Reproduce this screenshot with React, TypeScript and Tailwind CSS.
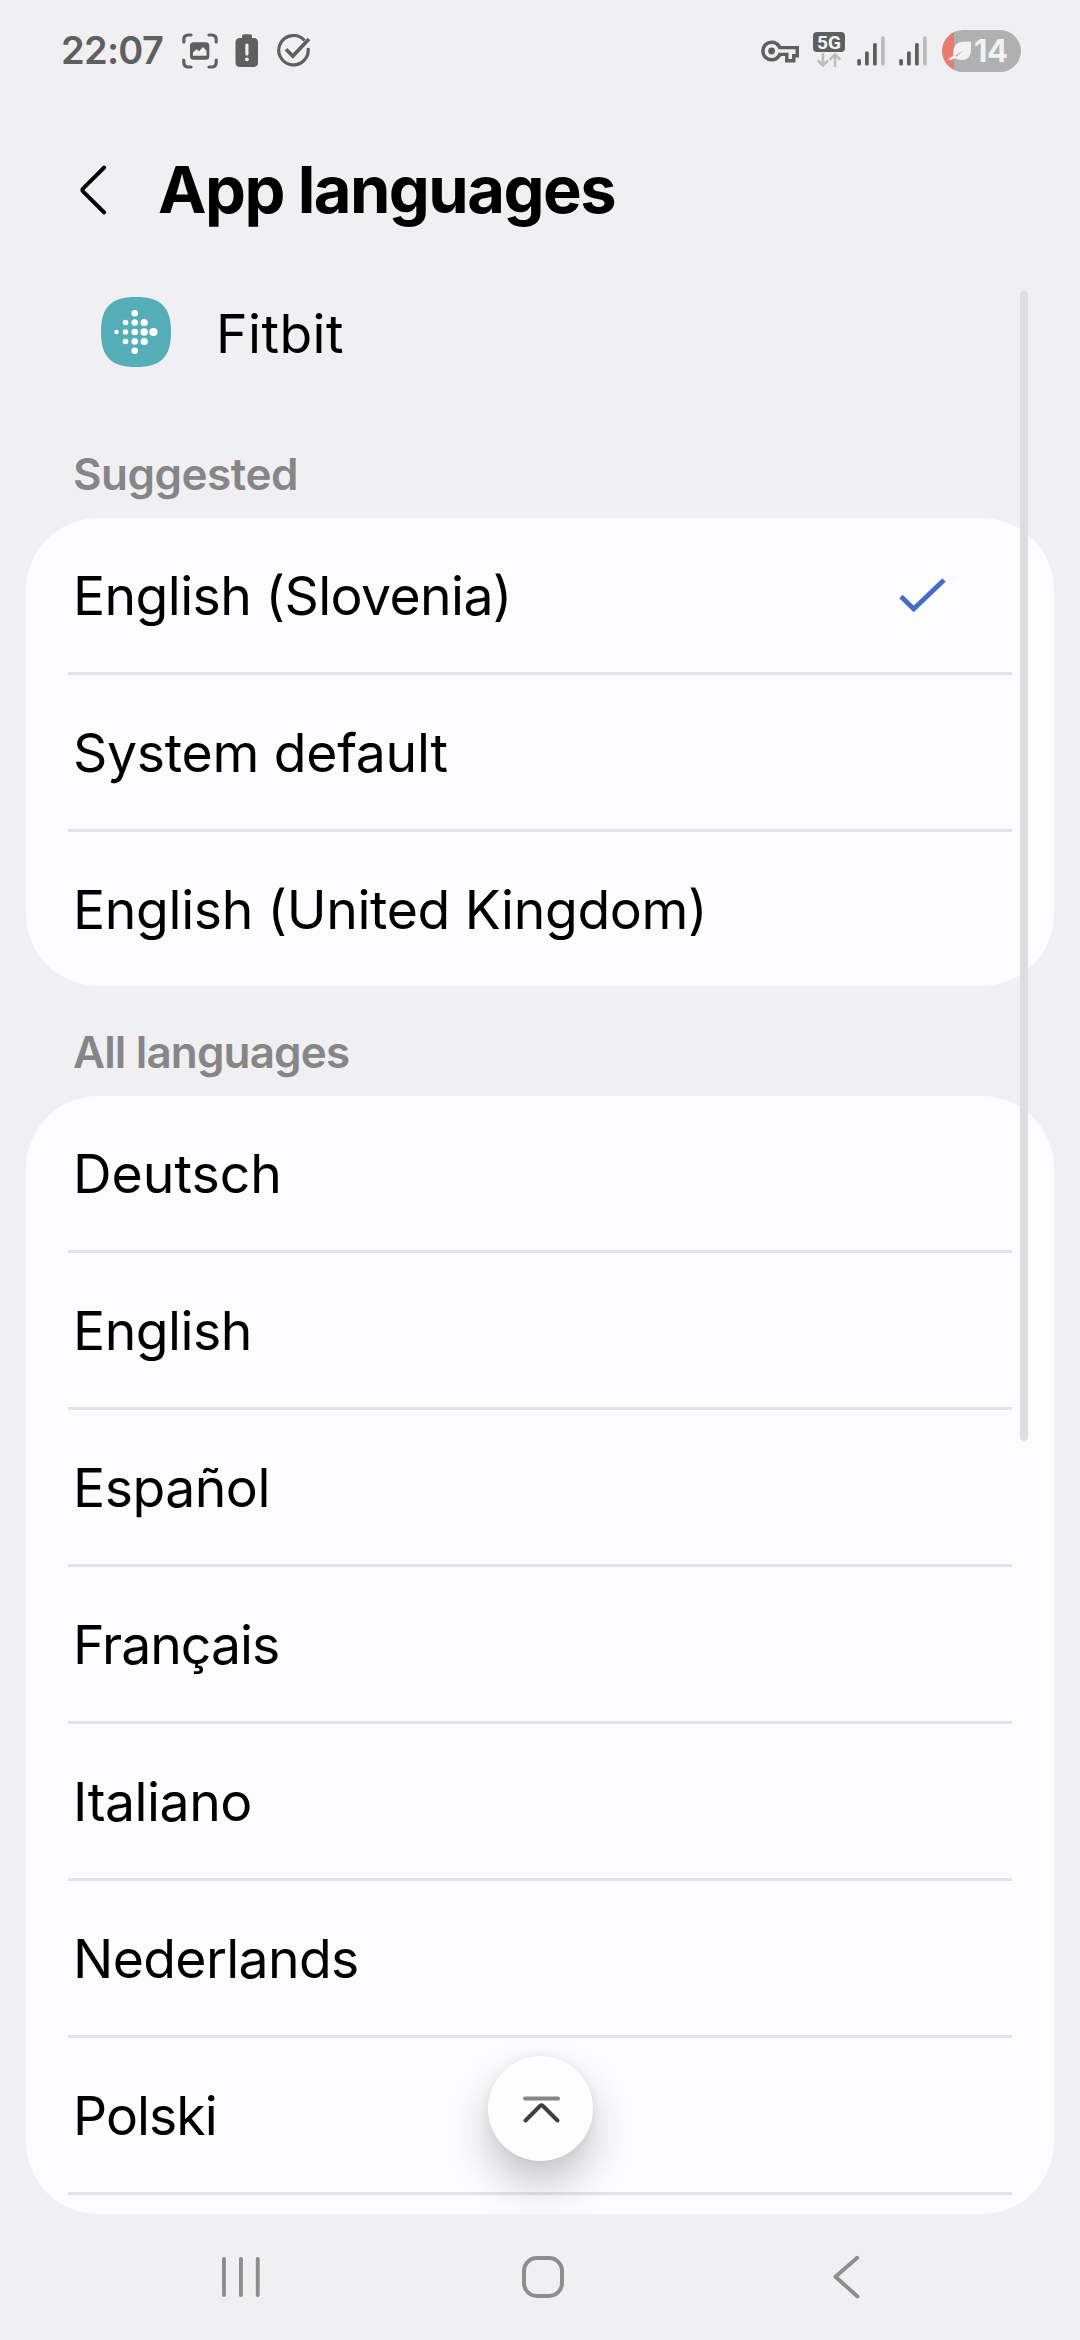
type Language = { name: string; tracking: string; selected?: boolean };

const suggested: Language[] = [
  { name: "English (Slovenia)", tracking: "tracking-[-0.6px]", selected: true },
  { name: "System default", tracking: "tracking-[-0.28px]" },
  { name: "English (United Kingdom)", tracking: "tracking-[-0.35px]" },
];

const allLanguages: Language[] = [
  { name: "Deutsch", tracking: "tracking-[0px]" },
  { name: "English", tracking: "tracking-[-0.5px]" },
  { name: "Español", tracking: "tracking-[-0.5px]" },
  { name: "Français", tracking: "tracking-[-1px]" },
  { name: "Italiano", tracking: "tracking-[-0.45px]" },
  { name: "Nederlands", tracking: "tracking-[-0.64px]" },
  { name: "Polski", tracking: "tracking-[-0.95px]" },
];

function Signal({ className }: { className: string }) {
  return (
    <svg className={className} width="28" height="30" viewBox="0 0 28 30" fill="#5f5f5f">
      <rect x="0.2" y="23" width="3.8" height="6.5" rx="1.6" />
      <rect x="8" y="15.2" width="3.8" height="14.3" rx="1.6" />
      <rect x="16" y="7" width="3.8" height="22.5" rx="1.6" />
      <rect x="24" y="0.2" width="3.8" height="29.3" rx="1.6" fill="#bcbcbd" />
    </svg>
  );
}

function StatusBar() {
  return (
    <header className="flex h-[102px] items-center pl-[61px] pr-[59px]">
      <span className="-mt-[2px] w-[121px] text-[38px] leading-none font-semibold tracking-[-0.7px] text-[#5f5f5f]">
        22:07
      </span>
      <svg width="36" height="36" viewBox="0 0 36 36" fill="none">
        <g stroke="#5f5f5f" strokeWidth="3.2" strokeLinecap="round">
          <path d="M1.8 9V6.500Q1.800 2 6.500 2H9M27 2h2.500Q34.200 2 34.200 6.500V9M34.200 27v2.500Q34.200 34 29.500 34H27M9 34H6.500Q1.800 34 1.800 29.500V27" />
        </g>
        <rect x="8" y="9.300" width="19.300" height="17.400" rx="3.500" fill="#5f5f5f" />
        <path d="M11 22.800v-3.300l3.600-3.300 2.400 2.100 4-4.200 3.500 3.700v5z" fill="#f0f0f2" />
      </svg>
      <svg className="ml-[17px]" width="24" height="34" viewBox="0 0 24 34">
        <path
          d="M7 3V2Q7 .300 9 .300h6Q17 .300 17 2v2h1.500Q23 4 23 8.500v20Q23 33 18.500 33h-13Q.500 33 .500 28.500v-20Q.500 4 5 4h2z"
          fill="#5f5f5f"
        />
        <path d="M11.900 11v9" stroke="#f0f0f2" strokeWidth="3.200" strokeLinecap="round" />
        <circle cx="11.900" cy="25.300" r="1.900" fill="#f0f0f2" />
      </svg>
      <svg className="ml-[18px]" width="34" height="34" viewBox="0 0 34 34" fill="none" stroke="#5f5f5f" strokeWidth="3.200">
        <path d="M27.500 6.500A14.700 14.700 0 1 0 31 14" strokeLinecap="butt" />
        <path d="M9 15.200l6.800 6.900L32 5" strokeWidth="3.600" />
      </svg>

      <svg className="ml-auto" width="39" height="24" viewBox="0 0 39 24">
        <path
          fillRule="evenodd"
          fill="#5f5f5f"
          d="M10.600 1.500Q17 1.500 20 7H38V18.500H34.500V23.500H24V17H20Q17 22.500 10.600 22.500A10.500 10.500 0 0 1 10.600 1.500ZM10.600 5A7 7 0 0 0 10.600 19Q15.500 19 17.500 13.800H27.500V20H31V15H34.500V10.300H17.500Q15.500 5 10.600 5Z"
        />
        <circle cx="10.600" cy="12" r="3.400" fill="#5f5f5f" />
      </svg>
      <div className="ml-[13px] flex h-[38px] w-[32px] flex-col items-center">
        <span className="flex h-[20px] w-[32px] items-center justify-center rounded-[4px] bg-[#5f5f5f] font-[Roboto] text-[19px] leading-none font-bold text-[#f4f4f6]">
          5G
        </span>
        <svg width="24" height="16" viewBox="0 0 24 16" fill="none" stroke="#bcbcbd" strokeWidth="2.500">
          <path d="M6 1v12.500M.800 8.500L6 13.500l5.200-5M18 15V2.500M12.800 7.500L18 2.500l5.200 5" />
        </svg>
      </div>
      <Signal className="ml-[12px]" />
      <Signal className="ml-[14px]" />
      <div className="ml-[15px] flex h-[42px] w-[79px] items-center rounded-full bg-[linear-gradient(to_right,#e87b6e_12px,#b0b0b0_12px)] pl-[7px]">
        <svg width="24" height="20" viewBox="0 0 24 20" fill="none">
          <path d="M22 .500V9Q22 19 12 19 8 19 6 17L14.500 9.500 4.500 15.500Q3.500 12 4.500 8.500 6.500 1 14 .800Z" fill="#f2f2f2" />
          <path d="M1 18L6 15.800" stroke="#f2f2f2" strokeWidth="2.600" strokeLinecap="round" />
        </svg>
        <span className="-mt-[2px] ml-px text-[31px] leading-none font-bold tracking-[-0.3px] text-[#f2f2f2]">14</span>
      </div>
    </header>
  );
}

function FitbitIcon() {
  const dots = [
    [15.500, 35, 2.200],
    [24.500, 25.500, 2.800],
    [24.500, 35, 2.800],
    [24.500, 44.500, 2.800],
    [33.700, 16.200, 3.300],
    [33.700, 25.500, 3.300],
    [33.700, 35, 3.300],
    [33.700, 44.500, 3.300],
    [33.700, 53.800, 3.300],
    [43.200, 25.500, 3.600],
    [43.200, 35, 3.800],
    [43.200, 44.500, 3.600],
    [52.400, 35, 4.100],
  ];
  return (
    <svg width="70" height="70" viewBox="0 0 70 70">
      <path d="M35 0C60 0 70 10 70 35S60 70 35 70 0 60 0 35 10 0 35 0Z" fill="#55adb7" />
      {dots.map(([x, y, r]) => (
        <circle key={`${x}-${y}`} cx={x} cy={y} r={r} fill="#fff" />
      ))}
    </svg>
  );
}

function LanguageRow({ language, divider }: { language: Language; divider: boolean }) {
  return (
    <li className="mx-[42px]">
      <div className="flex h-[154px] items-center justify-between pl-[5px] pt-px">
        <span className={`text-[53.5px] leading-none whitespace-nowrap text-black ${language.tracking}`}>
          {language.name}
        </span>
        {language.selected && (
          <svg className="mr-[66px]" width="47" height="36" viewBox="0 0 47 36" fill="none">
            <path d="M2 18.500L14.700 31 45 2" stroke="#466bce" strokeWidth="4.800" />
          </svg>
        )}
      </div>
      {divider && <div className="h-[3px] bg-[#e3e3e5]" />}
    </li>
  );
}

export default function App() {
  return (
    <div className="relative flex h-[2340px] w-[1080px] flex-col overflow-hidden bg-[#f0f0f2] font-[Inter,sans-serif]">
      <StatusBar />

      <div className="flex h-[175px] items-center pl-[78px]">
        <svg width="30" height="52" viewBox="0 0 30 52" fill="none">
          <path
            d="M26.200 3.500L5.200 24.300Q3.500 26 5.200 27.700L26.200 48.500"
            stroke="#000"
            strokeWidth="3.900"
            strokeLinecap="round"
          />
        </svg>
        <h1 className="ml-[50px] text-[65px] leading-none font-bold tracking-[-1.55px] whitespace-nowrap text-black">
          App languages
        </h1>
      </div>

      <div className="flex h-[110px] items-center pl-[101px]">
        <FitbitIcon />
        <span className="mt-[3px] ml-[45px] text-[53.500px] leading-none tracking-[0.45px] text-black">Fitbit</span>
      </div>

      <h2 className="flex h-[131px] items-center pt-[43px] pl-[73px] text-[44px] leading-none font-semibold tracking-[-0.5px] text-[#868688]">
        Suggested
      </h2>
      <ul className="mx-[26px] h-[468px] overflow-hidden rounded-[72px] bg-[#fcfcfe]">
        {suggested.map((language, i) => (
          <LanguageRow key={language.name} language={language} divider={i < suggested.length - 1} />
        ))}
      </ul>

      <h2 className="flex h-[110px] items-center pt-[22px] pl-[73px] text-[44px] leading-none font-semibold tracking-[-0.85px] text-[#868688]">
        All languages
      </h2>
      <div className="relative mx-[26px] h-[1118px] overflow-hidden rounded-[72px] bg-[#fcfcfe]">
        <ul>
          {allLanguages.map((language) => (
            <LanguageRow key={language.name} language={language} divider />
          ))}
        </ul>
        <button
          aria-label="Scroll to top"
          className="absolute top-[960px] left-[462px] flex size-[105px] items-center justify-center rounded-full bg-[#fdfdfe] shadow-[0_22px_42px_rgba(0,0,0,0.22),0_0_10px_rgba(0,0,0,0.06)]"
        >
          <svg width="40" height="30" viewBox="0 0 40 30" fill="none" strokeWidth="4" strokeLinecap="round">
            <path d="M4 4.500H37" stroke="#868686" />
            <path d="M4.500 26.500L19 12Q20.500 10.500 22 12L36.500 26.500" stroke="#3f3f3f" />
          </svg>
        </button>
      </div>

      <nav className="flex h-[126px] items-center">
        <svg className="ml-[222px]" width="38" height="42" viewBox="0 0 38 42" fill="#8d8d8e">
          <rect x="0" y="1" width="3.900" height="40" rx="1.900" />
          <rect x="17" y="1" width="3.900" height="40" rx="1.900" />
          <rect x="33.800" y="1" width="3.900" height="40" rx="1.900" />
        </svg>
        <div className="ml-[262px] size-[42px] rounded-[15px] border-4 border-[#8d8d8e]" />
        <svg className="ml-[267px]" width="30" height="44" viewBox="0 0 30 44" fill="none">
          <path
            d="M26.200 2.800L4.500 21.800L26.500 41.500"
            stroke="#8d8d8e"
            strokeWidth="3.900"
            strokeLinecap="round"
            strokeLinejoin="round"
          />
        </svg>
      </nav>

      <div className="absolute top-[291px] left-[1020px] h-[1150px] w-[8px] rounded-full bg-[#dedee0]" />
    </div>
  );
}
